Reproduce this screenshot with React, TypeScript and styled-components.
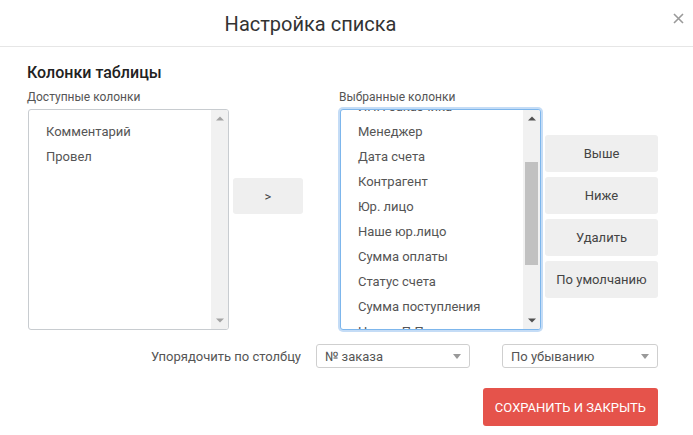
import React from "react";
import styled, { createGlobalStyle } from "styled-components";

const Global = createGlobalStyle`
  html, body { margin: 0; padding: 0; background: #fff; }
  body { font-family: Roboto, "Noto Sans", Arial, sans-serif; color: #555; }
  * { box-sizing: border-box; }
`;

const ITEM_H = 25;
const PAD_V = 9;

const Dialog = styled.div`
  width: 693px;
  height: 435px;
  background: #fff;
  overflow: hidden;
`;

const Header = styled.div`
  height: 47px;
  display: flex;
  align-items: center;
  border-bottom: 1px solid #e6e6e6;
`;

const Title = styled.h1`
  flex: 1;
  margin: 0;
  text-align: center;
  font-size: 20px;
  font-weight: 400;
  color: #333;
  line-height: 24px;
  padding-top: 1px;
`;

const Close = styled.button`
  width: 72px;
  height: 30px;
  border: 0;
  background: none;
  padding: 0 9px 10px 0;
  display: flex;
  align-items: center;
  justify-content: flex-end;
  cursor: pointer;
`;

const Body = styled.div`
  padding: 16px 35px 0 27px;
  display: flex;
  flex-direction: column;
`;

const SectionTitle = styled.h2`
  margin: 0;
  font-size: 16px;
  font-weight: 500;
  line-height: 20px;
  color: #222;
`;

const Columns = styled.div`
  display: flex;
  align-items: flex-start;
  margin-top: 6px;
`;

const ListColumn = styled.div<{ $ml?: number }>`
  display: flex;
  flex-direction: column;
  margin-left: ${(p) => p.$ml ?? 0}px;
`;

const Label = styled.div`
  font-size: 12px;
  line-height: 16px;
  color: #555;
  margin-bottom: 4px;
`;

const ListBox = styled.div<{ $focused?: boolean }>`
  width: 201px;
  height: 221px;
  margin-left: 1px;
  display: flex;
  border: 1px solid ${(p) => (p.$focused ? "#7db6ec" : "#c8ccd0")};
  border-radius: 3px;
  background: #fff;
  overflow: hidden;
  box-shadow: ${(p) => (p.$focused ? "0 0 0 2px #c4dcf6" : "none")};
`;

const Viewport = styled.div`
  flex: 1;
  overflow: hidden;
  position: relative;
`;

const Items = styled.ul<{ $offset: number }>`
  list-style: none;
  margin: 0;
  padding: ${PAD_V}px 0;
  transform: translateY(${(p) => -p.$offset}px);
`;

const Item = styled.li`
  height: ${ITEM_H}px;
  line-height: ${ITEM_H}px;
  padding-left: 17px;
  font-size: 13px;
  color: #555;
  white-space: nowrap;
`;

const Scrollbar = styled.div`
  width: 17px;
  background: #f1f1f1;
  display: flex;
  flex-direction: column;
  position: relative;
`;

const ArrowBox = styled.div`
  height: 17px;
  display: flex;
  align-items: center;
  justify-content: center;
`;

const Track = styled.div`
  flex: 1;
  position: relative;
`;

const Thumb = styled.div`
  position: absolute;
  left: 2px;
  right: 2px;
  background: #c1c1c1;
`;

const MoveButton = styled.button`
  width: 71px;
  height: 36px;
  margin-left: 4px;
  margin-top: 89px;
  border: 0;
  border-radius: 3px;
  background: #efefef;
  font-family: inherit;
  font-size: 13px;
  color: #444;
  cursor: pointer;
`;

const ActionColumn = styled.div`
  display: flex;
  flex-direction: column;
  gap: 5px;
  margin-left: 4px;
  margin-top: 46px;
`;

const ActionButton = styled.button`
  width: 113px;
  height: 37px;
  border: 0;
  border-radius: 3px;
  background: #efefef;
  font-family: inherit;
  font-size: 13px;
  color: #444;
  cursor: pointer;
`;

const SortRow = styled.div`
  display: flex;
  justify-content: flex-end;
  align-items: center;
  margin-top: 14px;
`;

const SortLabel = styled.span`
  font-size: 13px;
  color: #555;
  margin-right: 15px;
`;

const Select = styled.div<{ $w: number; $ml?: number }>`
  width: ${(p) => p.$w}px;
  height: 24px;
  margin-left: ${(p) => p.$ml ?? 0}px;
  border: 1px solid #cfcfcf;
  border-radius: 3px;
  display: flex;
  align-items: center;
  justify-content: space-between;
  padding: 0 8px 0 8px;
  font-size: 13px;
  color: #555;
`;

const Caret = styled.span`
  width: 0;
  height: 0;
  border-left: 4px solid transparent;
  border-right: 4px solid transparent;
  border-top: 5px solid #999;
`;

const Footer = styled.div`
  display: flex;
  justify-content: flex-end;
  margin-top: 20px;
`;

const SaveButton = styled.button`
  height: 38px;
  padding: 0 12px;
  border: 0;
  border-radius: 3px;
  background: #e5534b;
  color: #fff;
  font-family: inherit;
  font-size: 13px;
  text-transform: uppercase;
  cursor: pointer;
`;

const Arrow = ({ dir, color }: { dir: "up" | "down"; color: string }) => (
  <svg width="8" height="5" viewBox="0 0 8 5">
    {dir === "up" ? (
      <polygon points="0,4.5 4,0.5 8,4.5" fill={color} />
    ) : (
      <polygon points="0,0.5 4,4.5 8,0.5" fill={color} />
    )}
  </svg>
);

type ListProps = {
  items: string[];
  offset?: number;
  focused?: boolean;
};

const List = ({ items, offset = 0, focused }: ListProps) => {
  const viewH = 219;
  const contentH = items.length * ITEM_H + PAD_V * 2;
  const scrollable = contentH > viewH;
  const trackH = viewH - 34;
  const arrowColor = scrollable ? "#505050" : "#a3a3a3";
  return (
    <ListBox $focused={focused}>
      <Viewport>
        <Items $offset={offset}>
          {items.map((t) => (
            <Item key={t}>{t}</Item>
          ))}
        </Items>
      </Viewport>
      <Scrollbar>
        <ArrowBox>
          <Arrow dir="up" color={arrowColor} />
        </ArrowBox>
        <Track>
          {scrollable && (
            <Thumb
              style={{
                top: (trackH * offset) / contentH,
                height: (trackH * viewH) / contentH,
              }}
            />
          )}
        </Track>
        <ArrowBox>
          <Arrow dir="down" color={arrowColor} />
        </ArrowBox>
      </Scrollbar>
    </ListBox>
  );
};

const available = ["Комментарий", "Провел"];
const selected = [
  "№ заказа",
  "Дата заказа",
  "ИНН заказчика",
  "Менеджер",
  "Дата счета",
  "Контрагент",
  "Юр. лицо",
  "Наше юр.лицо",
  "Сумма оплаты",
  "Статус счета",
  "Сумма поступления",
  "Номер П.П.",
  "Дата П.П.",
  "Комментарий к счету",
  "Файлы",
];

export default function App() {
  return (
    <Dialog>
      <Global />
      <Header>
        <Title>Настройка списка</Title>
        <Close aria-label="Закрыть">
          <svg width="11" height="11" viewBox="0 0 11 11">
            <path d="M1 1 L10 10 M10 1 L1 10" stroke="#9a9a9a" strokeWidth="1.6" />
          </svg>
        </Close>
      </Header>
      <Body>
        <SectionTitle>Колонки таблицы</SectionTitle>
        <Columns>
          <ListColumn>
            <Label>Доступные колонки</Label>
            <List items={available} />
          </ListColumn>
          <MoveButton>&gt;</MoveButton>
          <ListColumn $ml={36}>
            <Label>Выбранные колонки</Label>
            <List items={selected} offset={75} focused />
          </ListColumn>
          <ActionColumn>
            <ActionButton>Выше</ActionButton>
            <ActionButton>Ниже</ActionButton>
            <ActionButton>Удалить</ActionButton>
            <ActionButton>По умолчанию</ActionButton>
          </ActionColumn>
        </Columns>
        <SortRow>
          <SortLabel>Упорядочить по столбцу</SortLabel>
          <Select $w={154}>
            № заказа
            <Caret />
          </Select>
          <Select $w={156} $ml={32}>
            По убыванию
            <Caret />
          </Select>
        </SortRow>
        <Footer>
          <SaveButton>Сохранить и закрыть</SaveButton>
        </Footer>
      </Body>
    </Dialog>
  );
}
